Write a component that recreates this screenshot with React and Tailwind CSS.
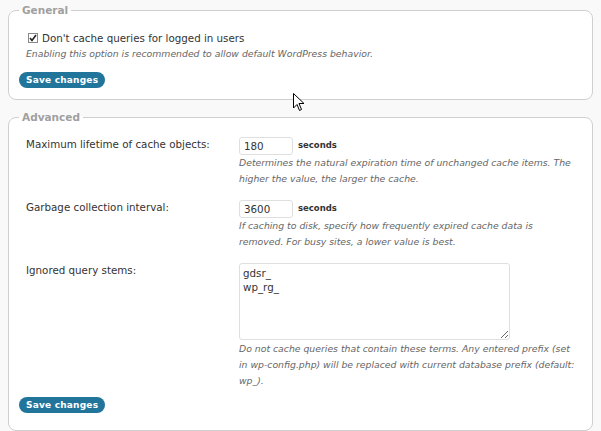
const font = { fontFamily: '"DejaVu Sans", Verdana, sans-serif' };

function SaveButton() {
  return (
    <button
      type="button"
      className="h-[16px] rounded-full bg-[#21759b] px-[7px] text-[9px] leading-[16px] font-bold tracking-[0.2px] text-white"
    >
      Save changes
    </button>
  );
}

function Fieldset({ legend, children, className }) {
  return (
    <fieldset
      className={`mx-[8px] rounded-[8px] border border-[#cfcfcf] bg-white px-[10px] ${className}`}
    >
      <legend className="px-[3px] text-[10.5px] font-bold text-[#a0a0a0]">{legend}</legend>
      {children}
    </fieldset>
  );
}

function Row({ label, children, className }) {
  return (
    <div className={`flex ${className}`}>
      <div className="w-[220px] shrink-0 pl-[7px] text-[10.3px] text-[#333]">{label}</div>
      <div className="w-[336px]">{children}</div>
    </div>
  );
}

function Desc({ children, className }) {
  return (
    <p className={`text-[9.3px] leading-[16px] italic text-[#666] ${className || ""}`}>
      {children}
    </p>
  );
}

function Seconds({ value }) {
  return (
    <div className="flex items-center gap-[5px]">
      <input
        readOnly
        value={value}
        className="h-[18px] w-[54px] rounded-[3px] border border-[#dfdfdf] bg-white px-[4px] text-[10.3px] text-[#333] outline-none"
      />
      <span className="text-[8.5px] font-bold text-[#333]">seconds</span>
    </div>
  );
}

export default function App() {
  return (
    <div className="relative h-[431px] w-[601px] bg-[#f9f9f9] pt-[3px]" style={font}>
      <Fieldset legend="General" className="h-[97px] pb-[10px]">
        <label className="mt-[12px] ml-[9px] flex items-center gap-[4px] text-[10.3px] text-[#333]">
          <svg width="10" height="10" viewBox="0 0 10 10">
            <rect x="0.5" y="0.5" width="9" height="9" fill="#fff" stroke="#888" />
            <path d="M2 5 L4 7.5 L8 2" fill="none" stroke="#222" strokeWidth="1.6" />
          </svg>
          Don't cache queries for logged in users
        </label>
        <div className="pl-[7px]">
          <Desc>Enabling this option is recommended to allow default WordPress behavior.</Desc>
        </div>
        <div className="mt-[4px]">
          <SaveButton />
        </div>
      </Fieldset>

      <Fieldset legend="Advanced" className="mt-[10px] h-[321px]">
        <Row label="Maximum lifetime of cache objects:" className="mt-[11px]">
          <Seconds value="180" />
          <Desc>
            Determines the natural expiration time of unchanged cache items. The higher the
            value, the larger the cache.
          </Desc>
        </Row>
        <Row label="Garbage collection interval:" className="mt-[13px]">
          <Seconds value="3600" />
          <Desc>
            If caching to disk, specify how frequently expired cache data is removed. For busy
            sites, a lower value is best.
          </Desc>
        </Row>
        <Row label="Ignored query stems:" className="mt-[13px]">
          <textarea
            readOnly
            value={"gdsr_\nwp_rg_"}
            className="block h-[77px] w-[271px] resize-y rounded-[3px] border border-[#dfdfdf] bg-white px-[3px] py-[2px] text-[10.3px] leading-[14px] text-[#333] outline-none"
          />
          <Desc className="mt-[1px]">
            Do not cache queries that contain these terms. Any entered prefix (set in
            wp-config.php) will be replaced with current database prefix (default: wp_).
          </Desc>
        </Row>
        <div className="mt-[2px]">
          <SaveButton />
        </div>
      </Fieldset>

      <svg
        className="absolute left-[293px] top-[93px]"
        width="12"
        height="19"
        viewBox="0 0 12 19"
      >
        <path
          d="M0.5 0.5 L0.5 15 L4 11.5 L6.5 17.5 L8.5 16.5 L6 10.5 L11 10.5 Z"
          fill="#fff"
          stroke="#000"
        />
      </svg>
    </div>
  );
}
